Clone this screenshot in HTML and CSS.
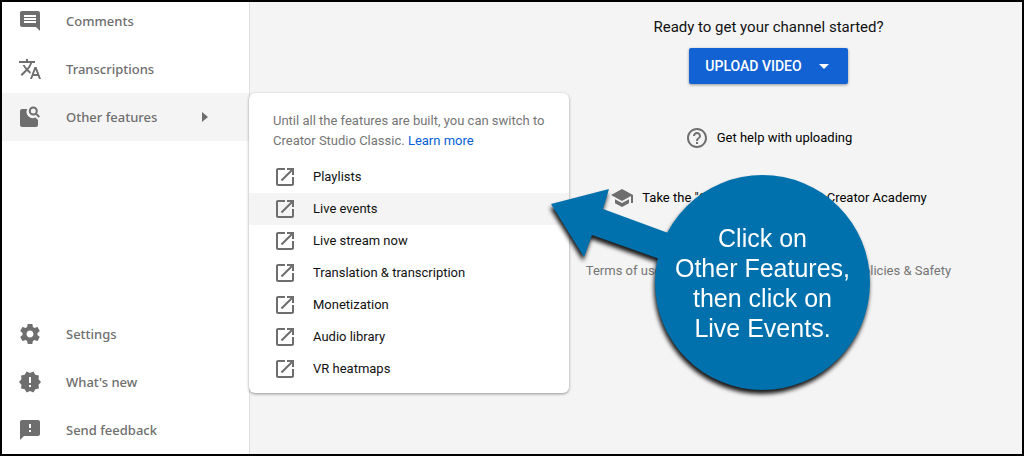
FILE: index.html
```html
<!DOCTYPE html>
<html lang="en">
<head>
    <meta charset="UTF-8">
    <meta name="viewport" content="width=device-width, initial-scale=1.0">
    <title>YouTube Studio</title>
    <link rel="stylesheet" href="styles.css">
</head>
<body>

<!-- Shared icons -->
<svg class="sprite" aria-hidden="true">
    <symbol id="open-in-new" viewBox="0 0 24 24">
        <path d="M19 19H5V5h7V3H5c-1.11 0-2 .9-2 2v14c0 1.1.89 2 2 2h14c1.1 0 2-.9 2-2v-7h-2v7zM14 3v2h3.59l-9.83 9.83 1.41 1.41L19 6.41V10h2V3h-7z"/>
    </symbol>
</svg>

<div class="app">
    <!-- Sidebar -->
    <nav class="sidebar">
        <ul class="nav-list nav-top">
            <li>
                <a class="nav-item" href="#">
                    <svg class="icon" viewBox="0 0 24 24"><path d="M21.99 4c0-1.1-.89-2-1.99-2H4c-1.1 0-2 .9-2 2v12c0 1.1.9 2 2 2h14l4 4-.01-18zM18 14H6v-2h12v2zm0-3H6V9h12v2zm0-3H6V6h12v2z"/></svg>
                    <span>Comments</span>
                </a>
            </li>
            <li>
                <a class="nav-item" href="#">
                    <svg class="icon" viewBox="0 0 24 24"><path d="M12.87 15.07l-2.54-2.51.03-.03c1.74-1.94 2.98-4.17 3.71-6.53H17V4h-7V2H8v2H1v1.99h11.17C11.5 7.92 10.44 9.75 9 11.35 8.07 10.32 7.3 9.19 6.69 8h-2c.73 1.63 1.73 3.17 2.98 4.56l-5.09 5.02L4 19l5-5 3.11 3.11.76-2.04zM18.5 10h-2L12 22h2l1.12-3h4.75L21 22h2l-4.5-12zm-2.62 7l1.62-4.33L19.12 17h-3.24z"/></svg>
                    <span>Transcriptions</span>
                </a>
            </li>
            <li class="has-menu">
                <a class="nav-item active" href="#">
                    <svg class="icon" viewBox="0 0 24 24">
                        <path d="M4 4h5.200a6.300 6.300 0 0 0 8.300 8.500L20 15v5a2 2 0 0 1-2 2H4a2 2 0 0 1-2-2V6a2 2 0 0 1 2-2z"/>
                        <circle cx="15.300" cy="6" r="3.500" fill="none" stroke="currentColor" stroke-width="2"/>
                        <path d="M17.200 9.300l1.400-1.400 3.400 3.400-1.400 1.400z"/>
                    </svg>
                    <span>Other features</span>
                    <svg class="icon caret" viewBox="0 0 24 24"><path d="M9 17l6-5-6-5v10z"/></svg>
                </a>

                <!-- Other features menu -->
                <div class="menu">
                    <p class="menu-note">Until all the features are built, you can switch to Creator Studio Classic. <a href="#">Learn more</a></p>
                    <ul class="menu-list">
                        <li><a class="menu-item" href="#"><svg class="icon"><use href="#open-in-new"/></svg>Playlists</a></li>
                        <li><a class="menu-item active" href="#"><svg class="icon"><use href="#open-in-new"/></svg>Live events</a></li>
                        <li><a class="menu-item" href="#"><svg class="icon"><use href="#open-in-new"/></svg>Live stream now</a></li>
                        <li><a class="menu-item" href="#"><svg class="icon"><use href="#open-in-new"/></svg>Translation &amp; transcription</a></li>
                        <li><a class="menu-item" href="#"><svg class="icon"><use href="#open-in-new"/></svg>Monetization</a></li>
                        <li><a class="menu-item" href="#"><svg class="icon"><use href="#open-in-new"/></svg>Audio library</a></li>
                        <li><a class="menu-item" href="#"><svg class="icon"><use href="#open-in-new"/></svg>VR heatmaps</a></li>
                    </ul>
                </div>
            </li>
        </ul>

        <ul class="nav-list">
            <li>
                <a class="nav-item" href="#">
                    <svg class="icon" viewBox="0 0 24 24"><path d="M19.43 12.98c.04-.32.07-.64.07-.98s-.03-.66-.07-.98l2.11-1.65c.19-.15.24-.42.12-.64l-2-3.46c-.12-.22-.39-.3-.61-.22l-2.490 1c-.52-.4-1.080-.73-1.690-.98l-.38-2.650C14.460 2.180 14.250 2 14 2h-4c-.25 0-.46.18-.49.42l-.38 2.650c-.61.25-1.170.59-1.690.98l-2.490-1c-.23-.09-.49 0-.61.22l-2 3.460c-.13.22-.07.49.12.64l2.110 1.650c-.04.32-.07.65-.07.98s.03.66.07.98l-2.110 1.650c-.19.15-.24.42-.12.64l2 3.460c.12.22.39.3.61.22l2.490-1c.52.4 1.080.73 1.690.98l.38 2.650c.03.24.24.42.49.42h4c.25 0 .46-.18.49-.42l.38-2.650c.61-.25 1.170-.59 1.690-.98l2.490 1c.23.09.49 0 .61-.22l2-3.460c.12-.22.07-.49-.12-.64l-2.110-1.650zM12 15.500c-1.930 0-3.500-1.570-3.500-3.500s1.570-3.500 3.500-3.500 3.500 1.570 3.500 3.500-1.570 3.500-3.500 3.500z"/></svg>
                    <span>Settings</span>
                </a>
            </li>
            <li>
                <a class="nav-item" href="#">
                    <svg class="icon" viewBox="0 0 24 24"><path d="M23 12l-2.440-2.780.34-3.680-3.610-.82-1.890-3.180L12 3 8.600 1.540 6.710 4.720l-3.610.81.34 3.680L1 12l2.440 2.780-.34 3.690 3.610.82 1.890 3.180L12 21l3.400 1.460 1.890-3.180 3.610-.82-.34-3.680L23 12zm-10 5h-2v-2h2v2zm0-4h-2V7h2v6z"/></svg>
                    <span>What's new</span>
                </a>
            </li>
            <li>
                <a class="nav-item" href="#">
                    <svg class="icon" viewBox="0 0 24 24"><path d="M20 2H4c-1.100 0-1.990.9-1.990 2L2 22l4-4h14c1.100 0 2-.9 2-2V4c0-1.100-.9-2-2-2zm-7 12h-2v-2h2v2zm0-4h-2V6h2v4z"/></svg>
                    <span>Send feedback</span>
                </a>
            </li>
        </ul>
    </nav>

    <!-- Main content -->
    <main class="content">
        <h1>Ready to get your channel started?</h1>
        <button class="upload" type="button">
            UPLOAD VIDEO
            <svg class="icon" viewBox="0 0 24 24"><path d="M7 10l5 5 5-5z"/></svg>
        </button>

        <a class="help-link" href="#">
            <svg class="icon" viewBox="0 0 24 24"><path d="M11 18h2v-2h-2v2zm1-16C6.480 2 2 6.480 2 12s4.480 10 10 10 10-4.480 10-10S17.520 2 12 2zm0 18c-4.410 0-8-3.590-8-8s3.590-8 8-8 8 3.590 8 8-3.590 8-8 8zm0-14c-2.210 0-4 1.790-4 4h2c0-1.100.9-2 2-2s2 .9 2 2c0 2-3 1.750-3 5h2c0-2.250 3-2.500 3-5 0-2.210-1.790-4-4-4z"/></svg>
            Get help with uploading
        </a>
        <a class="help-link" href="#">
            <svg class="icon" viewBox="0 0 24 24"><path d="M5 13.180v4L12 21l7-3.820v-4L12 17l-7-3.820zM12 3L1 9l11 6 9-4.910V17h2V9L12 3z"/></svg>
            Take the "Get started" course in Creator Academy
        </a>

        <footer class="footer">
            <a href="#">Terms of use</a>
            <a href="#">Privacy policy</a>
            <a href="#">Policies &amp; Safety</a>
        </footer>

        <!-- Callout bubble -->
        <div class="callout">
            <svg class="callout-arrow" viewBox="0 0 120 80"><path d="M0 17L58 2L52 22L120 47V76L41 48L33 70Z"/></svg>
            <p class="callout-bubble">Click on<br>Other Features,<br>then click on<br>Live Events.</p>
        </div>
    </main>
</div>

</body>
</html>
```
FILE: styles.css
```css
* {
    box-sizing: border-box;
}

body {
    margin: 0;
    font-family: Roboto, "Liberation Sans", sans-serif;
    font-size: 13px;
    line-height: 20px;
    color: #111;
    background-color: #f4f4f4;
}

ul, p, h1 {
    margin: 0;
    padding: 0;
    list-style: none;
}

a {
    color: inherit;
    text-decoration: none;
}

.sprite {
    display: none;
}

.icon {
    flex: none;
    width: 24px;
    height: 24px;
    fill: currentColor;
    color: #6e6e6e;
}

.app {
    display: flex;
    min-height: 100vh;
    border: 2px solid #000;
    overflow: hidden;
}

/* Sidebar */
.sidebar {
    display: flex;
    flex: none;
    flex-direction: column;
    justify-content: space-between;
    width: 248px;
    background-color: #fff;
    border-right: 1px solid #ddd;
}

/* list is scrolled slightly past the top */
.nav-top {
    margin-top: -5px;
}

.nav-item {
    display: flex;
    align-items: center;
    gap: 24px;
    height: 48px;
    padding: 0 32px 0 16px;
    font-family: "Noto Sans", sans-serif;
    font-size: 13px;
    font-weight: 500;
    color: #6e6e6e;
}

.nav-item.active {
    background-color: #f4f4f4;
}

.caret {
    margin-left: auto;
}

/* Flyout menu */
.has-menu {
    position: relative;
}

.menu {
    position: absolute;
    top: 0;
    left: 100%;
    z-index: 1;
    width: 320px;
    padding: 18px 0 8px;
    background-color: #fff;
    border-radius: 6px;
    box-shadow: 0 1px 3px rgba(0, 0, 0, 0.4);
}

.menu-note {
    padding: 0 24px 10px;
    color: #757575;
}

.menu-note a {
    color: #065fd4;
}

.menu-item {
    display: flex;
    align-items: center;
    gap: 16px;
    height: 32px;
    padding: 0 24px;
}

.menu-item.active {
    background-color: #f4f4f4;
}

/* Main content */
.content {
    position: relative;
    display: flex;
    flex: 1;
    flex-direction: column;
    align-items: center;
    padding: 15px 0 0 265px;
}

h1 {
    margin-bottom: 11px;
    font-size: 15px;
    font-weight: 400;
    line-height: 20px;
}

.upload {
    display: flex;
    align-items: center;
    gap: 10px;
    height: 36px;
    margin-bottom: 36px;
    padding: 0 12px 0 16px;
    border: none;
    border-radius: 2px;
    background-color: #1362d3;
    box-shadow: 0 1px 3px rgba(0, 0, 0, 0.4);
    color: #fff;
    font-family: inherit;
    font-size: 14px;
    font-weight: 500;
    cursor: pointer;
}

.upload .icon {
    color: #fff;
}

.help-link {
    display: flex;
    align-items: center;
    gap: 8px;
    height: 36px;
    margin-bottom: 24px;
    color: #000;
}

.footer {
    display: flex;
    gap: 57px;
    margin-top: 21px;
    color: #757575;
}

/* Callout */
.callout {
    position: absolute;
    top: 173px;
    left: 301px;
    z-index: 2;
    display: flex;
    filter: drop-shadow(-1px 4px 2px rgba(0, 0, 0, 0.9));
}

.callout-arrow {
    width: 120px;
    height: 80px;
    margin: 12px -16px 0 0;
    fill: #0071ad;
}

.callout-bubble {
    display: flex;
    align-items: center;
    justify-content: center;
    width: 215px;
    height: 215px;
    border-radius: 50%;
    background-color: #0071ad;
    color: #fff;
    font-family: "Liberation Sans", Arial, sans-serif;
    font-size: 25px;
    line-height: 30px;
    text-align: center;
}
```
